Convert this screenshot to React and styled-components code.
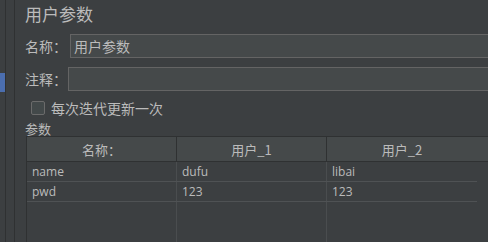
import React from 'react';
import styled, { createGlobalStyle } from 'styled-components';

const GlobalStyle = createGlobalStyle`
  html, body { margin: 0; padding: 0; background: #3c3f41; }
  body {
    font-family: "Open Sans", "Noto Sans CJK SC", sans-serif;
    color: #bbbbbb;
    overflow: hidden;
  }
`;

const columns = ['名称：', '用户_1', '用户_2'];
const rows = [
  ['name', 'dufu', 'libai'],
  ['pwd', '123', '123'],
];

export default function App() {
  return (
    <StPage>
      <GlobalStyle />
      <StRail>
        <StMarker />
      </StRail>
      <StGutter />
      <StContent>
        <StTitle>用户参数</StTitle>
        <StField $top={8}>
          <StLabel>名称：</StLabel>
          <StInput $left={0} defaultValue="用户参数" />
        </StField>
        <StField $top={9}>
          <StLabel>注释：</StLabel>
          <StInput $left={-2} defaultValue="" />
        </StField>
        <StCheckRow>
          <StCheckbox />
          <span>每次迭代更新一次</span>
        </StCheckRow>
        <StSection>参数</StSection>
        <StTable>
          <StHead>
            {columns.map((c) => (
              <StHeadCell key={c}>{c}</StHeadCell>
            ))}
          </StHead>
          <StBody>
            {rows.map((r) => (
              <StRow key={r[0]}>
                {r.map((v, i) => (
                  <StCell key={i}>{v}</StCell>
                ))}
              </StRow>
            ))}
            <StRow $empty>
              <StCell />
              <StCell />
              <StCell />
            </StRow>
          </StBody>
        </StTable>
      </StContent>
    </StPage>
  );
}

const StPage = styled.div`
  display: flex;
  width: 488px;
  height: 242px;
  overflow: hidden;
  background: #3c3f41;
`;

const StRail = styled.div`
  width: 5px;
  border-right: 1px solid #2f3132;
  padding-top: 73px;
  flex-shrink: 0;
`;

const StMarker = styled.div`
  width: 5px;
  height: 19px;
  background: #4b6eaf;
`;

const StGutter = styled.div`
  width: 8px;
  border-right: 1px solid #2f3132;
  flex-shrink: 0;
`;

const StContent = styled.div`
  flex: 1;
  min-width: 0;
  padding-left: 10px;
  display: flex;
  flex-direction: column;
`;

const StTitle = styled.div`
  font-family: "Noto Sans CJK SC", sans-serif;
  font-size: 17px;
  line-height: 24px;
  margin-top: 2px;
`;

const StField = styled.div`
  display: flex;
  align-items: center;
  margin-top: ${(p) => p.$top}px;
  height: 24px;
`;

const StLabel = styled.span`
  font-family: "Noto Sans CJK SC", sans-serif;
  font-size: 14px;
  width: 45px;
  flex-shrink: 0;
`;

const StInput = styled.input`
  margin-left: ${(p) => p.$left}px;
  height: 24px;
  box-sizing: border-box;
  width: 430px;
  flex-shrink: 0;
  background: #45494a;
  border: 1px solid #646464;
  color: #bbbbbb;
  font-family: "Noto Sans CJK SC", sans-serif;
  font-size: 14px;
  padding: 0 3px;
  outline: none;
`;

const StCheckRow = styled.div`
  display: flex;
  align-items: center;
  gap: 6px;
  margin-top: 9px;
  padding-left: 6px;
  height: 15px;
  font-family: "Noto Sans CJK SC", sans-serif;
  font-size: 14px;
`;

const StCheckbox = styled.span`
  width: 12px;
  height: 12px;
  border: 1px solid #6b6b6b;
  border-radius: 2px;
  background: #43494a;
`;

const StSection = styled.div`
  font-family: "Noto Sans CJK SC", sans-serif;
  font-size: 13px;
  line-height: 15px;
  margin-top: 6px;
`;

const StTable = styled.div`
  margin-left: 1px;
  flex: 1;
  display: flex;
  flex-direction: column;
  border-left: 1px solid #2f3132;
  width: 470px;
`;

const StHead = styled.div`
  display: flex;
  height: 26px;
  box-sizing: border-box;
  background: #45494a;
  border-top: 1px solid #2f3132;
  border-bottom: 1px solid #2f3132;
`;

const StHeadCell = styled.div`
  width: 150px;
  flex-shrink: 0;
  box-sizing: border-box;
  border-right: 1px solid #2f3132;
  display: flex;
  align-items: center;
  justify-content: center;
  font-family: "Noto Sans CJK SC", sans-serif;
  font-size: 13px;
  &:last-child {
    border-right: none;
  }
`;

const StBody = styled.div`
  flex: 1;
  display: flex;
  flex-direction: column;
`;

const StRow = styled.div`
  display: flex;
  height: ${(p) => (p.$empty ? 'auto' : '20px')};
  flex: ${(p) => (p.$empty ? 1 : 'none')};
  box-sizing: border-box;
  border-bottom: ${(p) => (p.$empty ? 'none' : '1px solid #4f5254')};
  width: 450px;
`;

const StCell = styled.div`
  width: 150px;
  flex-shrink: 0;
  box-sizing: border-box;
  border-right: 1px solid #4a4d4f;
  padding-left: 5px;
  display: flex;
  align-items: center;
  font-family: "Open Sans", "Noto Sans CJK SC", sans-serif;
  font-size: 12px;
  &:last-child {
    border-right: none;
  }
`;
